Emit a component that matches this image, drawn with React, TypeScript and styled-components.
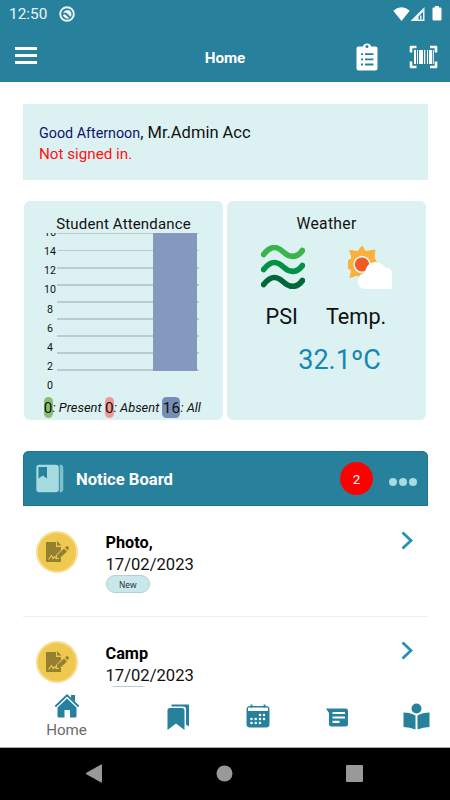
import React from "react";
import styled, { createGlobalStyle } from "styled-components";

const teal = "#27809c";
const mint = "#dcf1f2";

const Global = createGlobalStyle`
  * { box-sizing: border-box; }
  body { margin: 0; background: #fff; font-family: Roboto, "Liberation Sans", sans-serif; color: #111; }
  svg { display: block; flex: none; }
`;

const Screen = styled.div`
  width: 450px;
  height: 800px;
  display: flex;
  flex-direction: column;
  overflow: hidden;
  background: #fff;
`;

const Label = styled.span<{ $size: number; $space?: number; $color?: string; $weight?: number }>`
  font-size: ${(p) => p.$size}px;
  letter-spacing: ${(p) => p.$space ?? 0}px;
  color: ${(p) => p.$color ?? "#111"};
  font-weight: ${(p) => p.$weight ?? 400};
  white-space: pre;
`;

const StatusBar = styled.div`
  height: 28px;
  flex: none;
  background: ${teal};
  display: flex;
  align-items: center;
  padding: 0 8px 1px 9px;
`;

const CastIcon = styled.svg`
  margin-left: 12px;
`;

const StatusIcons = styled.div`
  display: flex;
  align-items: center;
  margin-left: auto;
`;

const Header = styled.header`
  height: 54px;
  flex: none;
  background: ${teal};
  display: grid;
  grid-template-columns: 1fr auto 1fr;
  align-items: center;
  padding: 5px 12px 0 15px;
`;

const HeaderTitle = styled.h1`
  margin: 0 3px 0 0;
  font-size: 15.2px;
  line-height: 20px;
  color: #fff;
  font-weight: 700;
`;

const MenuIcon = styled.div`
  width: 22px;
  height: 17px;
  border: solid #fff;
  border-width: 3px 0;
  display: flex;
  align-items: center;
  margin-top: -4px;
  &::before { content: ""; width: 22px; height: 3px; background: #fff; }
`;

const HeaderActions = styled.div`
  display: flex;
  justify-content: flex-end;
  align-items: center;
  gap: 31px;
  margin-top: -2px;
`;

const Content = styled.main`
  flex: none;
  height: 605px;
  overflow: hidden;
  padding: 22px 22.5px 0;
`;

const Greeting = styled.section`
  height: 75.5px;
  background: ${mint};
  padding: 17.5px 17px 0 16.5px;
`;

const Line = styled.div`
  height: 21px;
  line-height: 21px;
  white-space: nowrap;
`;

const Widgets = styled.div`
  display: grid;
  grid-template-columns: 199px 199px;
  gap: 4px;
  margin: 21.5px 0 0 1.5px;
`;

const Card = styled.section`
  height: 219px;
  border-radius: 6px;
  background: ${mint};
  display: flex;
  flex-direction: column;
  align-items: center;
`;

const CardTitle = styled.h2<{ $size: number; $space: number }>`
  margin: 13px 0 0;
  height: 19px;
  line-height: 20px;
  font-size: ${(p) => p.$size}px;
  letter-spacing: ${(p) => p.$space}px;
  font-weight: 400;
`;

const ChartArea = styled.div`
  width: 199px;
  height: 162px;
  overflow: hidden;
  display: flex;
  padding-left: 15px;
`;

const Axis = styled.div`
  width: 22px;
  display: flex;
  flex-direction: column;
  align-items: center;
  margin-top: -10px;
  flex: none;
`;

const Tick = styled.div`
  height: 19.15px;
  line-height: 19.15px;
  flex: none;
  font-size: 10.6px;
`;

const Plot = styled.div`
  width: 142px;
  height: 137.5px;
  margin-left: -4px;
  padding-right: 2px;
  display: flex;
  justify-content: flex-end;
  background: repeating-linear-gradient(to bottom, #b9cdd0 0 1.4px, transparent 1.4px 17.06px);
`;

const Bar = styled.div`
  width: 44px;
  background: #8499bd;
`;

const Legend = styled.div`
  display: flex;
  align-items: center;
  height: 21px;
  margin: 2px 2.5px 0 0;
  font-style: italic;
`;

const Count = styled.span<{ $bg: string; $w: number }>`
  width: ${(p) => p.$w}px;
  height: 20.5px;
  border-radius: 4.5px;
  background: ${(p) => p.$bg};
  display: flex;
  justify-content: center;
  align-items: center;
  font-size: 15.3px;
  font-style: normal;
`;

const WeatherIcons = styled.div`
  display: flex;
  gap: 43px;
  width: 199px;
  padding-left: 34px;
  margin-top: 12px;
`;

const WeatherNames = styled.div`
  display: flex;
  width: 199px;
  padding-left: 38.5px;
  gap: 28px;
  height: 30px;
  line-height: 30px;
  margin-top: 12.5px;
`;

const Temperature = styled.div`
  height: 36px;
  line-height: 36px;
  margin: 10.5px 0 0 26px;
`;

const Board = styled.section`
  margin-top: 31px;
`;

const BoardHeader = styled.div`
  height: 55px;
  background: ${teal};
  border-radius: 6px 6px 0 0;
  display: flex;
  align-items: center;
  padding: 0 10.5px 0 13px;
  box-shadow: inset 0 0 0 1px #1a7795;
`;

const BoardTitle = styled.h2`
  margin: 2px auto 0 12.5px;
  color: #fff;
  font-size: 16.6px;
  font-weight: 700;
`;

const Badge = styled.span`
  width: 33px;
  height: 33px;
  border-radius: 50%;
  background: #f00;
  color: #fff;
  font-size: 13.5px;
  display: flex;
  align-items: center;
  justify-content: center;
`;

const More = styled.div`
  display: flex;
  gap: 2px;
  margin: 6px 0 0 16px;
`;

const Dot = styled.i`
  width: 8px;
  height: 8px;
  border-radius: 50%;
  background: #a5dbe1;
`;

const Notice = styled.article`
  height: 110.6px;
  border-bottom: 1px solid #eee;
  display: flex;
  align-items: flex-start;
  padding: 24.5px 14.5px 0 13.5px;
`;

const Avatar = styled.div`
  width: 42px;
  height: 42px;
  border-radius: 50%;
  border: 2px solid #f7dd92;
  background: #efc850;
  display: flex;
  align-items: center;
  justify-content: center;
`;

const NoticeText = styled.div`
  margin: 1.5px auto 0 27.5px;
  display: flex;
  flex-direction: column;
  align-items: flex-start;
`;

const NoticeLine = styled.div`
  height: 22px;
  line-height: 22px;
`;

const NewTag = styled.span`
  width: 44.5px;
  height: 17.5px;
  border: 1px solid #b5cfd2;
  border-radius: 9px;
  background: #c9e8eb;
  color: #333;
  font: 8.4px/17.5px "Noto Sans", sans-serif;
  text-align: center;
  margin-top: -1px;
`;

const TabBar = styled.nav`
  height: 60.5px;
  flex: none;
  background: #fff;
  border-bottom: 1px solid #aaa;
  display: grid;
  grid-template-columns: 133px 91px 68px 90px 68px;
`;

const Tab = styled.div<{ $top: number }>`
  display: flex;
  flex-direction: column;
  align-items: center;
  gap: 3px;
  padding-top: ${(p) => p.$top}px;
`;

const SystemBar = styled.div`
  flex: 1;
  background: #000;
  display: flex;
  justify-content: space-between;
  align-items: center;
  padding: 0 87px 0 85px;
`;

const ticks = [16, 14, 12, 10, 8, 6, 4, 2, 0];

const DocIcon = () => (
  <svg width="24" height="22" viewBox="0 0 24 22">
    <path d="M1 1h10v5h5v3l-5 5v3h5v4H2q-1 0-1-1z" fill="#94802f" />
    <path d="M12 0l4.500 4.500H12z" fill="#94802f" />
    <path d="M12 17v-3l7-6.500 3 3-7 6.500z" fill="#94802f" />
    <path d="M20 6.500l1.200-1.100q1-.7 1.900.2l.5.6q.7.9 0 1.700L22.700 9.200z" fill="#94802f" />
    <path d="M3.500 18.500l3-4 1.500 3 2-2 1 2h3" fill="none" stroke="#efc850" strokeWidth="1.100" />
  </svg>
);

const Chevron = () => (
  <svg width="12" height="19" viewBox="0 0 12 19">
    <path d="M1.500 1.500l8.500 8-8.500 8" fill="none" stroke="#2592b5" strokeWidth="2.800" />
  </svg>
);

const Barcode = () => (
  <svg width="29" height="24" viewBox="0 0 29 24">
    <path d="M2 7.500V2h5.500M21 2h6v5.500M27 16.500V22h-6M7.500 22H2v-5.500" fill="none" stroke="#fff" strokeWidth="2.600" strokeLinejoin="round" />
    <path d="M5 5h2v14H5zM8 5h1v14H8zM10 5h4v14h-4zM15 5h1.300v14H15zM18 5h1v14h-1zM20 5h3v14h-3zM23.800 5h1v14h-1z" fill="#fff" />
  </svg>
);

const App = () => (
  <>
    <Global />
    <Screen>
      <StatusBar>
        <Label $size={15.4} $color="#e9f5f8">12:50</Label>
        <CastIcon width="16" height="16" viewBox="0 0 16 16">
          <circle cx="8" cy="8" r="6.800" fill="none" stroke="#edf7f9" strokeWidth="1.900" />
          <path d="M4 7.200A4.500 4.500 0 0 1 12.300 6.500q.6 2.500-.6 4.500L8 7.300 6 6.500z" fill="#edf7f9" />
          <path d="M4 8.800l2-.6 4.300 4A4.500 4.500 0 0 1 4 8.800z" fill="#edf7f9" />
        </CastIcon>
        <StatusIcons>
          <svg width="17" height="14" viewBox="0 0 17 14"><path d="M.3 3.700Q8.500-3 16.700 3.700L8.500 14z" fill="#fff" /></svg>
          <svg width="15" height="14" viewBox="0 0 15 14"><path fillRule="evenodd" d="M.5 14L14.500 0v14zM8.500 12.500h4.500V5l-4.500 4.500z" fill="#e8f4f7" /><path d="M10 8.500h1.500v4H10z" fill="#e8f4f7" /></svg>
          <svg width="17" height="15" viewBox="0 0 17 15"><path d="M9.800 0h4v1.500h1.500q1.200 0 1.200 1.200V13.300q0 1.200-1.200 1.200H8.700q-1.200 0-1.200-1.200V2.700q0-1.200 1.200-1.200h1.100z" fill="#fff" /></svg>
        </StatusIcons>
      </StatusBar>
      <Header>
        <MenuIcon />
        <HeaderTitle>Home</HeaderTitle>
        <HeaderActions>
          <svg width="22" height="28" viewBox="0 0 22 28">
            <path fillRule="evenodd" d="M2.500 3.500H7Q7.500.5 11 .5t4 3h4.500q2 0 2 2V25.500q0 2-2 2h-17q-2 0-2-2V5.500q0-2 2-2zM9.500 3.500a1.500 1.500 0 1 0 3 0a1.500 1.500 0 1 0-3 0" fill="#fff" />
            <path d="M5 11.200h2M5 16.400h2M5 21.500h2M9 11.200h8.500M9 16.400h8.500M9 21.500h8.500" stroke={teal} strokeWidth="1.800" />
          </svg>
          <Barcode />
        </HeaderActions>
      </Header>
      <Content>
        <Greeting>
          <Line>
            <Label $size={14.3} $color="#11116b">Good Afternoon</Label>
            <Label $size={16.5}>, Mr.Admin Acc</Label>
          </Line>
          <Line><Label $size={15.200} $color="#ff1111">Not signed in.</Label></Line>
        </Greeting>
        <Widgets>
          <Card>
            <CardTitle $size={15} $space={0.15}>Student Attendance</CardTitle>
            <ChartArea>
              <Axis>{ticks.map((t) => <Tick key={t}>{t}</Tick>)}</Axis>
              <Plot><Bar /></Plot>
            </ChartArea>
            <Legend>
              <Count $bg="#8abf73" $w={9}>0</Count>
              <Label $size={12.9}>: Present </Label>
              <Count $bg="#f09a98" $w={9}>0</Count>
              <Label $size={12.9}>: Absent </Label>
              <Count $bg="#788db5" $w={18}>16</Count>
              <Label $size={12.9}>: All</Label>
            </Legend>
          </Card>
          <Card>
            <CardTitle $size={15.700} $space={0.3}>Weather</CardTitle>
            <WeatherIcons>
              <svg width="44" height="44" viewBox="0 0 44 44" fill="none" strokeWidth="5.700" strokeLinecap="round">
                <path d="M2.600 9.500C11-1 17 2 23 7.500S36 13 41.400 5.500" stroke="#39b54a" />
                <path d="M2.600 24.500C11 14 17 17 23 22.500S36 28 41.400 20.500" stroke="#009245" />
                <path d="M2.600 39.500C11 29 17 32 23 37.500S36 43 41.400 35.500" stroke="#006837" />
              </svg>
              <svg width="44" height="44" viewBox="0 0 44 44">
                <path d="M14 1l3.500 5.500 9.500-1.500-1 7.500 4 7.500-4 8-12 6-5-4-7 2.500 1.500-7-3.500-2.500v-7l4-3L1.800 5.500l8 1z" fill="#fbb03b" stroke="#fbb03b" strokeLinejoin="round" />
                <circle cx="14" cy="19.500" r="7.900" fill="#f15a24" stroke={mint} strokeWidth="1.600" />
                <path d="M17 44q-7-1-7-8t6.500-8q2.500-11 11-11 6 0 9 5.500 7.500-1 7.500 6V44z" fill="#fff" />
              </svg>
            </WeatherIcons>
            <WeatherNames>
              <Label $size={21.700}>PSI</Label>
              <Label $size={21.700}>Temp.</Label>
            </WeatherNames>
            <Temperature><Label $size={27} $color="#1587b0">32.1ºC</Label></Temperature>
          </Card>
        </Widgets>
        <Board>
          <BoardHeader>
            <svg width="28" height="29" viewBox="0 0 28 29">
              <rect x=".3" y=".8" width="22.500" height="27.400" rx="3" fill="#a5dbe1" />
              <path d="M23.700 .6q3.600.3 3.600 3.500V25q0 3.200-3.600 3.500z" fill="#7dc1cd" />
              <path d="M2.500 3H11v11.500l-4.200-3-4.300 3z" fill={teal} />
            </svg>
            <BoardTitle>Notice Board</BoardTitle>
            <Badge>2</Badge>
            <More><Dot /><Dot /><Dot /></More>
          </BoardHeader>
          <Notice>
            <Avatar><DocIcon /></Avatar>
            <NoticeText>
              <NoticeLine><Label $size={16.300} $weight={700} $color="#000">Photo,</Label></NoticeLine>
              <NoticeLine><Label $size={16.600}>17/02/2023</Label></NoticeLine>
              <NewTag>New</NewTag>
            </NoticeText>
            <Chevron />
          </Notice>
          <Notice>
            <Avatar><DocIcon /></Avatar>
            <NoticeText>
              <NoticeLine><Label $size={16.300} $weight={700} $color="#000">Camp</Label></NoticeLine>
              <NoticeLine><Label $size={16.600}>17/02/2023</Label></NoticeLine>
              <NewTag />
            </NoticeText>
            <Chevron />
          </Notice>
        </Board>
      </Content>
      <TabBar>
        <Tab $top={6}>
          <svg width="26" height="25" viewBox="0 0 26 25">
            <path d="M13 5.500l9.500 9V23q0 1.500-1.500 1.500h-5V17h-5.500v7.500H5Q3.500 24.500 3.500 23V14.500z" fill={teal} />
            <path d="M1.300 13.500L13 2.300l11.700 11.200" fill="none" stroke={teal} strokeWidth="1.800" />
            <path d="M17 2h4v7l-4-4z" fill={teal} />
          </svg>
          <Label $size={15.100} $color="#6b6b6b">Home</Label>
        </Tab>
        <Tab $top={16.5}>
          <svg width="23" height="27" viewBox="0 0 23 27">
            <path d="M4.500 .5h17.500v22l-3-2V5q0-2.500-3-2.500H4.500z" fill={teal} />
            <path d="M.5 6.500q0-2.500 2.500-2.500h12q2.500 0 2.500 2.500V26L9 19.500.5 26z" fill={teal} />
          </svg>
        </Tab>
        <Tab $top={17}>
          <svg width="24" height="24" viewBox="0 0 24 24">
            <path fillRule="evenodd" d="M4 2h16q3.500 0 3.500 3.500V20q0 3.500-3.500 3.500H4Q.5 23.500.5 20V5.500Q.5 2 4 2zM2 7h20V4.500q0-1-1-1H3q-1 0-1 1z" fill={teal} />
            <path d="M5.500.5v3M18.500.5v3" stroke={teal} strokeWidth="1.800" />
            <path d="M14 11h.01M18 11h.01M5.500 15h.01M9.700 15h.01M14 15h.01M18 15h.01M5.500 19h.01M9.700 19h.01M14 19h.01" stroke="#fff" strokeWidth="2.600" strokeLinecap="round" />
          </svg>
        </Tab>
        <Tab $top={20.5}>
          <svg width="22" height="20" viewBox="0 0 22 20">
            <path d="M0 .5h19.500q2.500 0 2.500 2.500v13q0 2.500-2.500 2.500h-14Q3 18.500 3 16V5z" fill={teal} />
            <path d="M6.500 5h12.500M6.500 9.500h12.500M6.500 13.800h7" stroke="#fff" strokeWidth="2.200" />
          </svg>
        </Tab>
        <Tab $top={16}>
          <svg width="27" height="27" viewBox="0 0 27 27">
            <circle cx="13.500" cy="5.500" r="5" fill={teal} />
            <path d="M.5 9.500q7 0 12 3v14Q7 24 .5 24zM26.500 9.500q-7 0-12 3v14q5.500-2.500 12-2.500z" fill={teal} />
          </svg>
        </Tab>
      </TabBar>
      <SystemBar>
        <svg width="18" height="19" viewBox="0 0 18 19"><path d="M1 9.500L16.500.8v17.400z" fill="#999" stroke="#999" strokeLinejoin="round" /></svg>
        <svg width="17" height="17" viewBox="0 0 17 17"><circle cx="8.500" cy="8.500" r="8" fill="#999" /></svg>
        <svg width="17" height="17" viewBox="0 0 17 17"><rect width="17" height="17" rx="1" fill="#999" /></svg>
      </SystemBar>
    </Screen>
  </>
);

export default App;
